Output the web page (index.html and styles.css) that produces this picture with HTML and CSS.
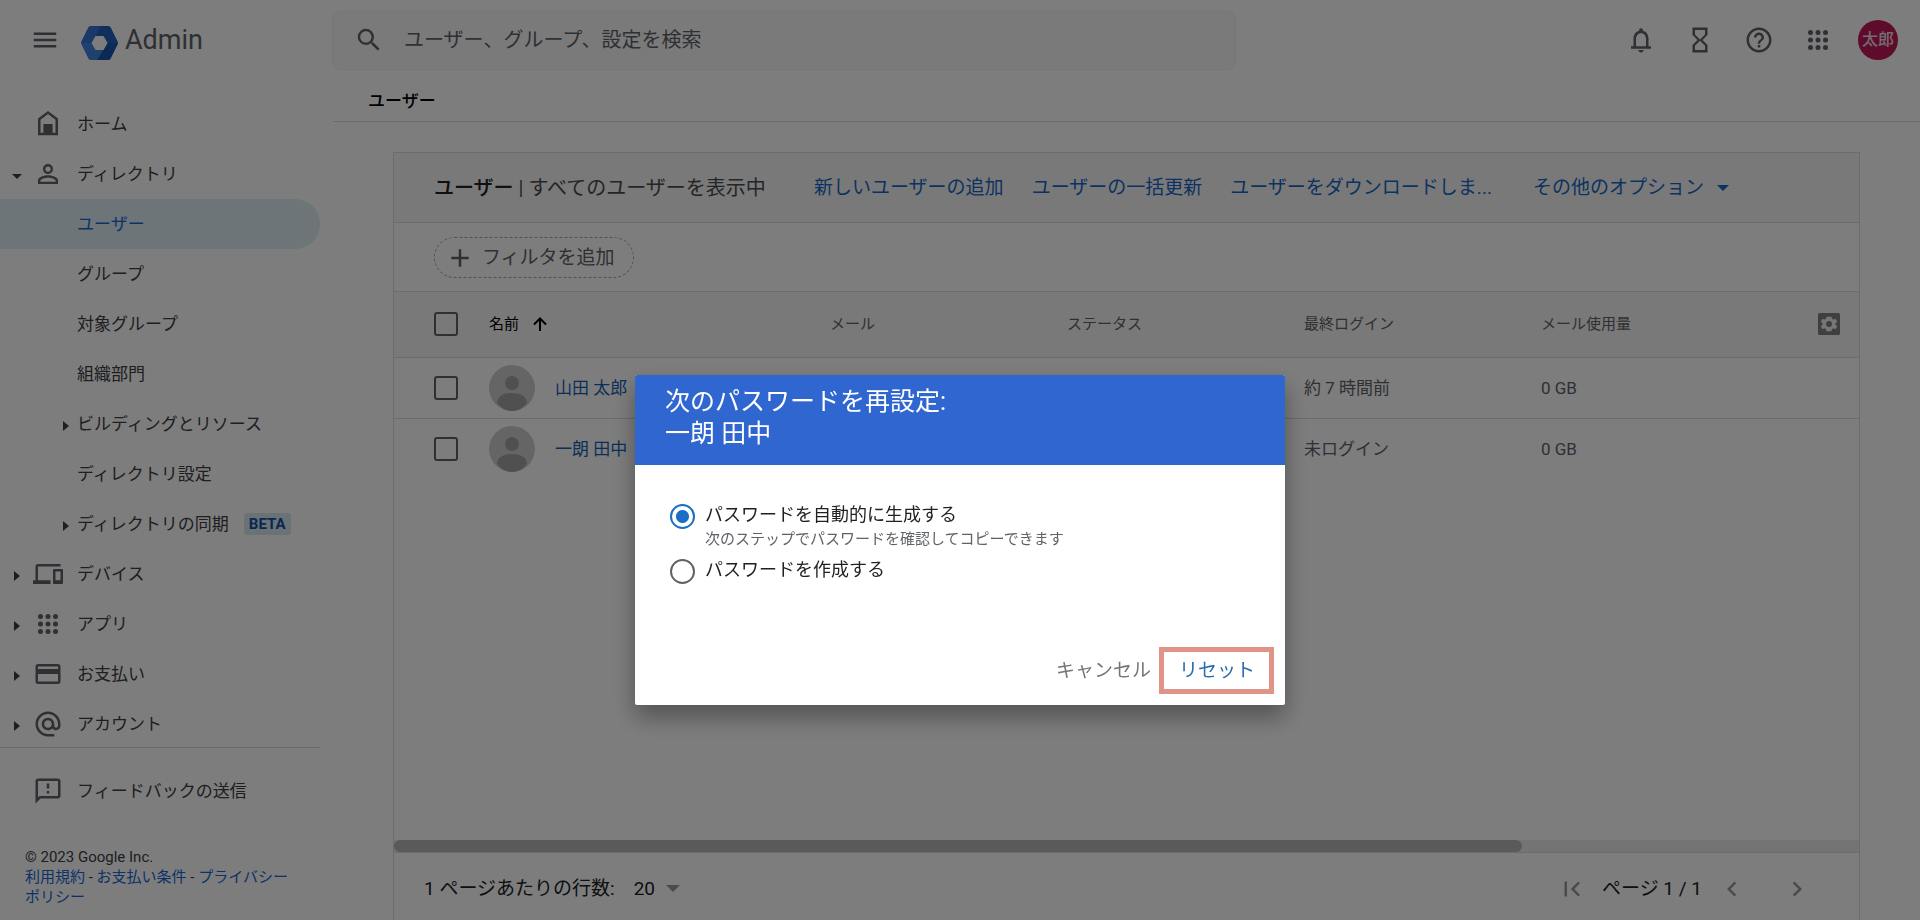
FILE: index.html
```html
<!DOCTYPE html>
<html lang="ja">
<head>
<meta charset="utf-8">
<title>Admin - ユーザー</title>
<meta name="viewport" content="width=device-width, initial-scale=1">
<link rel="stylesheet" href="styles.css">
</head>
<body>
<svg class="sprite" aria-hidden="true">
  <symbol id="i-apps" viewBox="0 0 24 24"><circle cx="6" cy="6" r="2"/><circle cx="12" cy="6" r="2"/><circle cx="18" cy="6" r="2"/><circle cx="6" cy="12" r="2"/><circle cx="12" cy="12" r="2"/><circle cx="18" cy="12" r="2"/><circle cx="6" cy="18" r="2"/><circle cx="12" cy="18" r="2"/><circle cx="18" cy="18" r="2"/></symbol>
  <symbol id="i-right" viewBox="0 0 6 10"><path d="M0 0l6 5-6 5z"/></symbol>
  <symbol id="i-down" viewBox="0 0 10 5"><path d="M0 0h10L5 5z"/></symbol>
  <symbol id="i-person" viewBox="0 0 46 46"><circle cx="23" cy="23" r="23" fill="#cfcfcf"/><circle cx="23" cy="18" r="7" fill="#a3a3a3"/><path d="M8 38c0-7 7-10 15-10s15 3 15 10c-4 5-9 8-15 8s-11-3-15-8z" fill="#a3a3a3"/></symbol>
</svg>

<div class="page">
  <header class="topbar">
    <div class="brand">
      <button class="icon-btn" aria-label="メインメニュー"><svg class="icon" viewBox="0 0 24 24"><path d="M3 18h18v-2H3v2zm0-5h18v-2H3v2zm0-7v2h18V6H3z"/></svg></button>
      <a class="logo" href="#">
        <svg class="logo-mark" viewBox="0 0 37 34"><path fill="#4285e0" d="M10 0h17a3 3 0 0 1 2.600 1.500L36.500 15.500a3 3 0 0 1 0 3L29.600 32.500A3 3 0 0 1 27 34H10a3 3 0 0 1-2.600-1.500L.5 18.500a3 3 0 0 1 0-3L7.400 1.500A3 3 0 0 1 10 0z"/><path fill="#3574d6" d="M10 0h11l-6.500 10-4 7L.2 17a3 3 0 0 1 .3-1.500L7.400 1.500A3 3 0 0 1 10 0z"/><path fill="#2460b8" d="M20 0h7a3 3 0 0 1 2.600 1.500L36.500 15.500a3 3 0 0 1 .3 1.500H26.500l-4-7h-8z"/><path fill="#1a57b0" d="M27 34H16l6.500-10 4-7h10.300a3 3 0 0 1-.3 1.500L29.600 32.500A3 3 0 0 1 27 34z"/><path fill="#fff" d="M14.500 10h8l4 7-4 7h-8l-4-7z"/></svg>
        <span>Admin</span>
      </a>
    </div>
    <form class="search" role="search">
      <svg class="icon" viewBox="0 0 24 24"><path d="M15.500 14h-.79l-.28-.27A6.470 6.470 0 0 0 16 9.500 6.500 6.500 0 1 0 9.500 16c1.610 0 3.090-.59 4.230-1.570l.27.28v.79l5 4.990L20.490 19l-4.990-5zm-6 0C7.010 14 5 11.990 5 9.500S7.010 5 9.500 5 14 7.010 14 9.500 11.990 14 9.500 14z"/></svg>
      <input type="search" aria-label="検索" placeholder="ユーザー、グループ、設定を検索">
    </form>
    <div class="tools">
      <button class="icon-btn" aria-label="通知"><svg class="icon" viewBox="0 0 24 24"><path d="M18 17v-6c0-3.070-1.630-5.640-4.500-6.320V4a1.500 1.500 0 0 0-3 0v.68C7.640 5.360 6 7.920 6 11v6H4v2h16v-2h-2zm-2 0H8v-6c0-2.480 1.510-4.500 4-4.500s4 2.020 4 4.500v6zm-4 5c1.100 0 2-.9 2-2h-4c0 1.100.9 2 2 2z"/></svg></button>
      <button class="icon-btn" aria-label="タスク"><svg class="icon" viewBox="0 0 24 24"><path d="M6 2v6l4 4-4 4v6h12v-6l-4-4 4-4V2H6zm10 14.500V20H8v-3.500l4-4 4 4zm-4-5l-4-4V4h8v3.500l-4 4z"/></svg></button>
      <button class="icon-btn" aria-label="ヘルプ"><svg class="icon" viewBox="0 0 24 24"><path d="M11 18h2v-2h-2v2zm1-16C6.480 2 2 6.480 2 12s4.480 10 10 10 10-4.480 10-10S17.520 2 12 2zm0 18c-4.410 0-8-3.590-8-8s3.590-8 8-8 8 3.590 8 8-3.590 8-8 8zm0-14c-2.210 0-4 1.790-4 4h2c0-1.100.9-2 2-2s2 .9 2 2c0 2-3 1.750-3 5h2c0-2.250 3-2.500 3-5 0-2.210-1.790-4-4-4z"/></svg></button>
      <button class="icon-btn" aria-label="アプリ"><svg class="icon"><use href="#i-apps"/></svg></button>
      <button class="account">太郎</button>
    </div>
  </header>

  <aside class="sidebar">
    <nav class="nav">
      <a class="nav-item" href="#"><span class="caret"></span><svg class="icon" viewBox="0 0 24 24"><path d="M12 1.500l-8 6V21h16V7.500l-8-6zM18 19h-2.500v-7h-7v7H6V8.500L12 4l6 4.500V19z"/><path d="M8.500 12.500h7V20h-7z"/></svg><span>ホーム</span></a>
      <a class="nav-item" href="#"><span class="caret"><svg class="tri-down"><use href="#i-down"/></svg></span><svg class="icon" viewBox="0 0 24 24"><path d="M12 5.900a2.100 2.100 0 1 1 0 4.200 2.100 2.100 0 0 1 0-4.200m0 9c2.970 0 6.100 1.460 6.100 2.100v1.100H5.900V17c0-.64 3.130-2.100 6.100-2.100M12 4C9.790 4 8 5.790 8 8s1.790 4 4 4 4-1.790 4-4-1.790-4-4-4zm0 9c-2.670 0-8 1.340-8 4v3h16v-3c0-2.660-5.330-4-8-4z"/></svg><span>ディレクトリ</span></a>
      <a class="nav-item sub active" href="#"><span class="caret"></span><span>ユーザー</span></a>
      <a class="nav-item sub" href="#"><span class="caret"></span><span>グループ</span></a>
      <a class="nav-item sub" href="#"><span class="caret"></span><span>対象グループ</span></a>
      <a class="nav-item sub" href="#"><span class="caret"></span><span>組織部門</span></a>
      <a class="nav-item sub" href="#"><span class="caret"><svg class="tri-right"><use href="#i-right"/></svg></span><span>ビルディングとリソース</span></a>
      <a class="nav-item sub" href="#"><span class="caret"></span><span>ディレクトリ設定</span></a>
      <a class="nav-item sub" href="#"><span class="caret"><svg class="tri-right"><use href="#i-right"/></svg></span><span>ディレクトリの同期</span><span class="beta">BETA</span></a>
      <a class="nav-item" href="#"><span class="caret"><svg class="tri-right"><use href="#i-right"/></svg></span><svg class="icon" viewBox="0 0 24 24"><path d="M4 6h18V4H4c-1.100 0-2 .9-2 2v11H0v3h14v-3H4V6zm19 2h-6c-.55 0-1 .45-1 1v10c0 .55.45 1 1 1h6c.55 0 1-.45 1-1V9c0-.55-.45-1-1-1zm-1 9h-4v-7h4v7z"/></svg><span>デバイス</span></a>
      <a class="nav-item" href="#"><span class="caret"><svg class="tri-right"><use href="#i-right"/></svg></span><svg class="icon"><use href="#i-apps"/></svg><span>アプリ</span></a>
      <a class="nav-item" href="#"><span class="caret"><svg class="tri-right"><use href="#i-right"/></svg></span><svg class="icon" viewBox="0 0 24 24"><path d="M20 4H4c-1.110 0-1.990.89-1.990 2L2 18c0 1.110.89 2 2 2h16c1.110 0 2-.89 2-2V6c0-1.110-.89-2-2-2zm0 14H4v-6h16v6zm0-10H4V6h16v2z"/></svg><span>お支払い</span></a>
      <a class="nav-item" href="#"><span class="caret"><svg class="tri-right"><use href="#i-right"/></svg></span><svg class="icon" viewBox="0 0 24 24"><path d="M12 2C6.480 2 2 6.480 2 12s4.480 10 10 10h5v-2h-5c-4.340 0-8-3.660-8-8s3.660-8 8-8 8 3.660 8 8v1.430c0 .79-.71 1.570-1.500 1.570s-1.500-.78-1.500-1.570V12c0-2.760-2.240-5-5-5s-5 2.240-5 5 2.240 5 5 5c1.380 0 2.640-.56 3.540-1.470.65.89 1.770 1.470 2.960 1.470 1.970 0 3.500-1.600 3.500-3.570V12c0-5.520-4.480-10-10-10zm0 13c-1.660 0-3-1.340-3-3s1.340-3 3-3 3 1.340 3 3-1.340 3-3 3z"/></svg><span>アカウント</span></a>
    </nav>
    <div class="feedback">
      <a class="nav-item" href="#"><span class="caret"></span><svg class="icon" viewBox="0 0 24 24"><path d="M20 2H4c-1.100 0-1.990.9-1.990 2L2 22l4-4h14c1.100 0 2-.9 2-2V4c0-1.100-.9-2-2-2zm0 14H5.170L4 17.170V4h16v12zM11 12h2v2h-2zm0-6h2v4h-2z"/></svg><span>フィードバックの送信</span></a>
    </div>
    <footer class="legal">© 2023 Google Inc.<br><a href="#">利用規約</a> - <a href="#">お支払い条件</a> - <a href="#">プライバシー<br>ポリシー</a></footer>
  </aside>

  <main class="main">
    <div class="crumb">ユーザー</div>
    <section class="card">
      <div class="card-head">
        <h1><b>ユーザー</b> | すべてのユーザーを表示中</h1>
        <div class="actions">
          <a href="#">新しいユーザーの追加</a>
          <a href="#">ユーザーの一括更新</a>
          <a href="#">ユーザーをダウンロードしま...</a>
        </div>
        <button class="more">その他のオプション<svg class="tri-more"><use href="#i-down"/></svg></button>
      </div>
      <div class="filters">
        <button class="chip"><svg class="icon" viewBox="0 0 24 24"><path d="M19 13h-6v6h-2v-6H5v-2h6V5h2v6h6v2z"/></svg>フィルタを追加</button>
      </div>
      <div class="table-wrap">
        <table>
          <colgroup><col class="c-check"><col class="c-name"><col class="c-data"><col class="c-data"><col class="c-data"><col><col class="c-gear"></colgroup>
          <thead>
            <tr>
              <th><input class="check" type="checkbox" aria-label="すべて選択"></th>
              <th class="sorted"><span class="cell">名前 <svg class="arrow" viewBox="0 0 14 14"><path d="M7 14V2M1 7.500L7 1.500l6 6" fill="none" stroke="currentColor" stroke-width="2"/></svg></span></th>
              <th>メール</th>
              <th>ステータス</th>
              <th>最終ログイン</th>
              <th>メール使用量</th>
              <th><button class="gear" aria-label="列の管理"><svg viewBox="0 0 24 24"><rect width="24" height="24" rx="2" fill="#808080"/><path fill="#f1f1f1" d="M19 12.900a7 7 0 0 0 0-1.800l2-1.500-1.900-3.300-2.300 1a7 7 0 0 0-1.600-.9L14.800 4H9.200L8.800 6.400a7 7 0 0 0-1.600.9l-2.300-1L3 9.600l2 1.500a7 7 0 0 0 0 1.800l-2 1.500 1.900 3.300 2.300-1a7 7 0 0 0 1.600.9l.4 2.400h5.600l.4-2.400a7 7 0 0 0 1.600-.9l2.300 1 1.900-3.300zM12 15.200a3.200 3.200 0 1 1 0-6.400 3.200 3.200 0 0 1 0 6.400z"/></svg></button></th>
            </tr>
          </thead>
          <tbody>
            <tr>
              <td><input class="check" type="checkbox" aria-label="山田 太郎"></td>
              <td><span class="cell user"><svg class="avatar"><use href="#i-person"/></svg><a href="#">山田 太郎</a></span></td>
              <td></td><td></td><td>約 7 時間前</td><td>0 GB</td><td></td>
            </tr>
            <tr>
              <td><input class="check" type="checkbox" aria-label="一朗 田中"></td>
              <td><span class="cell user"><svg class="avatar"><use href="#i-person"/></svg><a href="#">一朗 田中</a></span></td>
              <td></td><td></td><td>未ログイン</td><td>0 GB</td><td></td>
            </tr>
          </tbody>
        </table>
      </div>
      <div class="scrollbar"><div class="thumb"></div></div>
      <div class="pager">
        <label for="rows">1 ページあたりの行数:</label>
        <span class="rows"><select id="rows"><option>20</option></select><svg class="tri-rows"><use href="#i-down"/></svg></span>
        <div class="pages">
          <button class="icon-btn" aria-label="最初のページ" disabled><svg class="icon" viewBox="0 0 24 24"><path d="M18.410 16.590L13.820 12l4.590-4.590L17 6l-6 6 6 6zM6 6h2v12H6z"/></svg></button>
          <span>ページ 1 / 1</span>
          <button class="icon-btn prev" aria-label="前のページ" disabled><svg class="icon" viewBox="0 0 24 24"><path d="M15.410 7.410L14 6l-6 6 6 6 1.410-1.410L10.830 12z"/></svg></button>
          <button class="icon-btn" aria-label="次のページ" disabled><svg class="icon" viewBox="0 0 24 24"><path d="M10 6L8.590 7.410 13.170 12l-4.580 4.590L10 18l6-6z"/></svg></button>
        </div>
      </div>
    </section>
  </main>
</div>

<div class="scrim">
  <div class="dialog" role="dialog" aria-modal="true" aria-labelledby="dialog-title">
    <h2 class="dialog-title" id="dialog-title">次のパスワードを再設定:<br>一朗 田中</h2>
    <form class="dialog-body">
      <div class="option">
        <input type="radio" name="mode" id="auto" checked>
        <div class="option-text"><label for="auto">パスワードを自動的に生成する</label><p>次のステップでパスワードを確認してコピーできます</p></div>
      </div>
      <div class="option">
        <input type="radio" name="mode" id="manual">
        <div class="option-text"><label for="manual">パスワードを作成する</label></div>
      </div>
    </form>
    <div class="dialog-actions">
      <button class="cancel">キャンセル</button>
      <button class="reset">リセット</button>
    </div>
  </div>
</div>
</body>
</html>
```
FILE: styles.css
```css
* { box-sizing: border-box; }

body {
  margin: 0;
  background: #fff;
  color: #3c4043;
  font-family: Roboto, "Noto Sans CJK JP", sans-serif;
  font-size: 17px;
  line-height: 24px;
  overflow: hidden;
}

a { color: inherit; text-decoration: none; }

button, input, select {
  margin: 0;
  padding: 0;
  border: 0;
  background: none;
  color: inherit;
  font: inherit;
}

svg { display: block; flex: none; fill: currentColor; }

.sprite { position: absolute; width: 0; height: 0; }
.icon { width: 30px; height: 30px; }
.icon-btn { display: flex; flex: none; }

.page {
  display: grid;
  grid-template-columns: 333px minmax(0, 1fr);
  grid-template-rows: 80px minmax(0, 1fr);
  height: 100vh;
}

/* Top bar */
.topbar {
  grid-column: 1 / -1;
  display: flex;
  align-items: center;
  color: #5f6368;
}

.brand {
  display: flex;
  align-items: center;
  gap: 21px;
  width: 333px;
  padding-left: 30px;
}

.logo { display: flex; align-items: center; gap: 7px; font-size: 27px; line-height: 32px; }
.logo-mark { width: 37px; height: 34px; margin-top: 5px; }

.search {
  display: flex;
  align-items: center;
  gap: 20px;
  width: 902px;
  height: 57px;
  padding-left: 21px;
  border-radius: 8px;
  background: #f8f8f8;
  box-shadow: 0 0 3px #ddd;
}

.search input { flex: 1; font-size: 20px; line-height: 28px; outline: 0; }
.search input::placeholder { color: #5f6368; opacity: 1; }

.tools { display: flex; align-items: center; gap: 29px; margin-left: auto; padding-right: 22px; }

.account {
  width: 40px;
  height: 40px;
  margin-left: -4px;
  border-radius: 50%;
  background: #c2185b;
  color: #f0dde4;
  font-size: 16px;
  font-weight: 500;
}

/* Side navigation */
.sidebar { width: 320px; padding-top: 19px; }
.nav { height: 649px; border-bottom: 1px solid #dadce0; }

.nav-item { display: flex; align-items: center; height: 50px; }
.nav-item .icon { margin-right: 14px; color: #5f6368; }
.caret { display: flex; justify-content: center; flex: none; width: 33px; padding-top: 4px; }
.sub .caret { width: 77px; padding-left: 54px; }
.tri-right { width: 6px; height: 10px; }
.tri-down { width: 10px; height: 5px; }

.active { border-radius: 0 25px 25px 0; background: #e0eef6; color: #1967d2; }

.beta {
  margin-left: 15px;
  padding: 0 5px;
  border-radius: 3px;
  background: #d6eaf0;
  color: #174ea6;
  font-size: 15px;
  font-weight: 700;
  line-height: 22px;
}

.feedback { padding-top: 18px; }
.legal { padding: 31px 0 0 25px; font-size: 15px; line-height: 20px; }
.legal a { color: #1967d2; }

/* Main area */
.main { display: flex; flex-direction: column; min-width: 0; }

.crumb {
  height: 42px;
  padding: 9px 35px 8px;
  border-bottom: 1px solid #dadce0;
  color: #000;
  font-weight: 500;
}

.card {
  display: flex;
  flex: 1;
  flex-direction: column;
  margin: 30px 60px 0;
  border: 1px solid #dadce0;
  border-bottom: 0;
}

.card-head {
  display: flex;
  align-items: center;
  height: 70px;
  padding: 0 40px;
  border-bottom: 1px solid #dadce0;
  background: #f6f6f6;
  font-size: 19px;
  white-space: nowrap;
}

.card-head h1 { width: 380px; margin: 0; font-size: 20px; font-weight: 400; color: #4a4d50; }
.card-head b { color: #202124; font-weight: 500; }
.actions { display: flex; gap: 28px; margin-right: 41px; }
.actions a, .more { color: #1a66c8; }
.more { display: flex; align-items: center; gap: 13px; }
.tri-more { width: 12px; height: 6px; }

.filters { padding: 14px 40px 13px; border-bottom: 1px solid #dadce0; }

.chip {
  display: flex;
  align-items: center;
  gap: 7px;
  height: 41px;
  padding: 0 18px 0 10px;
  border: 1px dashed #a5a8ab;
  border-radius: 21px;
  color: #5f6368;
  font-size: 19px;
}

.table-wrap { flex: 1; overflow: hidden; }

table { width: 100%; table-layout: fixed; border-collapse: collapse; }
.c-check { width: 95px; }
.c-name { width: 341px; }
.c-data { width: 237px; }
.c-gear { width: 69px; }

th, td { padding: 0; text-align: left; border-bottom: 1px solid #dadce0; color: #5f6368; }
th { height: 65px; background: #f6f6f6; font-size: 15px; font-weight: 400; }
td { height: 61px; }
tbody tr:last-child td { border-bottom: 0; }
th:first-child, td:first-child { padding-left: 40px; }

.cell { display: flex; align-items: center; }
.sorted .cell { gap: 14px; color: #000; }
.arrow { width: 14px; height: 14px; }
.user { gap: 20px; }
.user a { color: #1a5fb4; }
.avatar { width: 46px; height: 46px; }

.check {
  display: block;
  width: 24px;
  height: 24px;
  border: 2px solid #5f6368;
  border-radius: 3px;
  appearance: none;
}

.gear { display: block; margin-left: 28px; }
.gear svg { width: 22px; height: 22px; }

.scrollbar { height: 13px; background: #ececec; border-bottom: 1px solid #dadce0; }
.thumb { width: 77%; height: 12px; border-radius: 6px; background: #b8b8b8; }

.pager {
  display: flex;
  align-items: center;
  height: 67px;
  padding: 4px 47px 0 30px;
  color: #202124;
  font-size: 19px;
}

.rows { display: flex; align-items: center; gap: 10px; margin-left: 19px; color: #202124; }
.rows select { appearance: none; }
.tri-rows { width: 14px; height: 7px; color: #9a9a9a; }
.pages { display: flex; align-items: center; gap: 15px; margin-left: auto; }
.pages .icon-btn { color: #9a9a9a; }
.prev { margin-right: 20px; }

/* Password dialog */
.scrim {
  position: fixed;
  inset: 0;
  display: flex;
  align-items: center;
  justify-content: center;
  padding-top: 160px;
  background: rgba(0, 0, 0, 0.51);
}

.dialog {
  width: 650px;
  max-width: 100%;
  border-radius: 2px;
  background: #fff;
  box-shadow: 0 12px 24px rgba(0, 0, 0, 0.35);
}

.dialog-title {
  margin: 0;
  padding: 11px 30px 15px;
  border-radius: 2px 2px 0 0;
  background: #2f66d0;
  color: #fff;
  font-size: 25px;
  font-weight: 400;
  line-height: 32px;
}

.dialog-body { display: flex; flex-direction: column; gap: 7px; min-height: 182px; padding: 38px 35px 0; }
.option { display: flex; gap: 10px; color: #202124; font-size: 18px; }
.option-text p { margin: 0; color: #5f6368; font-size: 15px; }

.option input {
  width: 25px;
  height: 25px;
  margin-top: 1px;
  border: 2px solid #5f6368;
  border-radius: 50%;
  appearance: none;
}

.option input:checked {
  border-color: #1a6fc4;
  background: radial-gradient(circle, #1a6fc4 6px, #fff 7px);
}

.dialog-actions { display: flex; justify-content: flex-end; gap: 8px; padding: 0 11px 11px; font-size: 19px; }
.cancel { color: #757575; }
.reset { height: 47px; padding: 0 14px 0 15px; border: 5px solid #e09488; color: #2a6cb0; }
```
